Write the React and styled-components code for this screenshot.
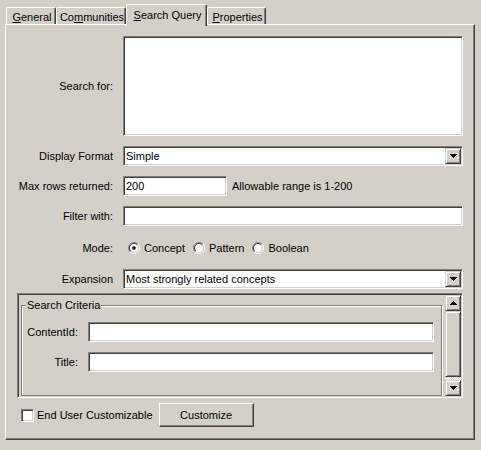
import React from "react";
import styled, { createGlobalStyle, css } from "styled-components";

const GlobalStyle = createGlobalStyle`
  body {
    margin: 0;
    background: #d4d0c8;
    font-family: "Liberation Sans", Arial, sans-serif;
    font-size: 11px;
    color: #000;
  }
`;

const sunken = css`
  box-sizing: border-box;
  background: #fff;
  border: 1px solid;
  border-color: #808080 #fff #fff #808080;
  box-shadow: inset 1px 1px #404040, inset -1px -1px #d4d0c8;
`;

const raised = css`
  box-sizing: border-box;
  background: #d4d0c8;
  border: 1px solid;
  border-color: #d4d0c8 #404040 #404040 #d4d0c8;
  box-shadow: inset 1px 1px #fff, inset -1px -1px #808080;
`;

const Window = styled.div`
  width: 481px;
  height: 450px;
  box-sizing: border-box;
  padding-top: 4px;
`;

const TabBar = styled.div`
  display: flex;
  align-items: flex-end;
  height: 20px;
  padding-left: 6px;
  position: relative;
  z-index: 1;
`;

const Tab = styled.div`
  box-sizing: border-box;
  width: ${p => p.$w}px;
  height: ${p => (p.$active ? 22 : 17)}px;
  margin-bottom: ${p => (p.$active ? -2 : 0)}px;
  padding-top: ${p => (p.$active ? 4 : 3)}px;
  padding-left: 2px;
  line-height: 13px;
  text-align: center;
  white-space: nowrap;
  background: #d4d0c8;
  border-top: 1px solid #fff;
  border-left: 1px solid #fff;
  border-right: 1px solid #404040;
  border-radius: 2px 2px 0 0;
  box-shadow: inset -1px 0 #808080;
`;

const Panel = styled.div`
  box-sizing: border-box;
  width: 470px;
  margin-left: 5px;
  padding: 11px 11px 12px 1px;
  border: 1px solid;
  border-color: #fff #404040 #404040 #fff;
  box-shadow: inset -1px -1px #808080;
`;

const Form = styled.div`
  display: grid;
  grid-template-columns: 106px 340px;
  column-gap: 10px;
  row-gap: 10px;
  align-items: center;
`;

const Label = styled.label`
  text-align: right;
  white-space: nowrap;
`;

const TextArea = styled.textarea`
  ${sunken};
  display: block;
  width: 100%;
  height: 100px;
  margin: 0;
  padding: 2px;
  resize: none;
  outline: none;
  font: inherit;
`;

const Field = styled.input`
  ${sunken};
  display: block;
  width: ${p => (p.$w ? `${p.$w}px` : "100%")};
  height: 20px;
  margin: 0;
  padding: 0 2px;
  outline: none;
  font: inherit;
  color: #000;
`;

const Inline = styled.div`
  display: flex;
  align-items: center;
  gap: 5px;
`;

const Combo = styled.div`
  ${sunken};
  display: flex;
  height: 20px;
  padding: 1px;
`;

const ComboText = styled.div`
  flex: 1;
  padding-left: 1px;
  line-height: 16px;
`;

const ArrowButton = styled.div`
  ${raised};
  width: 16px;
  height: 16px;
  display: flex;
  align-items: center;
  justify-content: center;
`;

const RadioGroup = styled.div`
  display: flex;
  align-items: center;
  height: 23px;
  padding-left: 5px;
`;

const RadioOption = styled.span`
  display: flex;
  align-items: center;
  gap: 4px;
  margin-right: 8px;
`;

const ScrollPane = styled.div`
  ${sunken};
  background: #d4d0c8;
  display: flex;
  height: 105px;
  margin: 4px 0 0 10px;
  padding: 1px;
`;

const Viewport = styled.div`
  flex: 1;
  overflow: hidden;
  padding: 4px 3px 0 2px;
`;

const GroupBox = styled.fieldset`
  margin: 0;
  min-width: 0;
  padding: 10px 7px 23px 4px;
  border: 1px solid #808080;
  box-shadow: inset 1px 1px #fff, 1px 1px 0 #fff;
`;

const Legend = styled.legend`
  padding: 0 1px;
  line-height: 13px;
  background: #d4d0c8;
`;

const GroupGrid = styled.div`
  display: grid;
  grid-template-columns: 52px 346px;
  column-gap: 10px;
  row-gap: 10px;
  align-items: center;
`;

const ScrollBar = styled.div`
  display: flex;
  flex-direction: column;
  width: 16px;
`;

const Thumb = styled.div`
  ${raised};
  flex: 1;
`;

const Track = styled.div`
  height: 3px;
  background: repeating-conic-gradient(#fff 0 25%, #d4d0c8 0 50%) 0 0 / 2px 2px;
`;

const BottomRow = styled.div`
  display: flex;
  align-items: center;
  height: 24px;
  margin: 5px 0 0 14px;
`;

const CheckBox = styled.span`
  ${sunken};
  width: 13px;
  height: 13px;
  margin-right: 3px;
`;

const Button = styled.button`
  box-sizing: border-box;
  width: 95px;
  height: 24px;
  margin-left: 6px;
  padding: 0;
  font: inherit;
  color: #000;
  background: #d4d0c8;
  border: 1px solid;
  border-color: #fff #404040 #404040 #fff;
  box-shadow: inset -1px -1px #808080;
`;

const Arrow = ({ up }) => (
  <svg width="7" height="4" viewBox="0 0 7 4" style={up ? { transform: "scaleY(-1)" } : undefined}>
    <path d="M0 0H7V1H6V2H5V3H4V4H3V3H2V2H1V1H0Z" fill="#000" />
  </svg>
);

const Radio = ({ checked }) => (
  <svg width="12" height="12" viewBox="0 0 12 12">
    <circle cx="6" cy="6" r="4.2" fill="#fff" />
    <path d="M2.1 9.9A5.5 5.5 0 0 1 9.9 2.1" stroke="#808080" fill="none" />
    <path d="M9.9 2.1A5.5 5.5 0 0 1 2.1 9.9" stroke="#fff" fill="none" />
    <path d="M2.8 9.2A4.5 4.5 0 0 1 9.2 2.8" stroke="#404040" fill="none" />
    <path d="M9.2 2.8A4.5 4.5 0 0 1 2.8 9.2" stroke="#d4d0c8" fill="none" />
    {checked && <circle cx="6" cy="6" r="1.8" fill="#000" />}
  </svg>
);

const tabs = [
  { pre: "", key: "G", post: "eneral", w: 50 },
  { pre: "Co", key: "m", post: "munities", w: 70 },
  { pre: "", key: "S", post: "earch Query", w: 81, active: true },
  { pre: "", key: "P", post: "roperties", w: 59 },
];

export default function App() {
  return (
    <Window>
      <GlobalStyle />
      <TabBar>
        {tabs.map(t => (
          <Tab key={t.post} $w={t.w} $active={t.active}>
            {t.pre}<u>{t.key}</u>{t.post}
          </Tab>
        ))}
      </TabBar>
      <Panel>
        <Form>
          <Label>Search for:</Label>
          <TextArea />

          <Label>Display Format</Label>
          <Combo>
            <ComboText>Simple</ComboText>
            <ArrowButton><Arrow /></ArrowButton>
          </Combo>

          <Label>Max rows returned:</Label>
          <Inline>
            <Field $w={104} defaultValue="200" />
            <span>Allowable range is 1-200</span>
          </Inline>

          <Label>Filter with:</Label>
          <Field />

          <Label>Mode:</Label>
          <RadioGroup>
            <RadioOption><Radio checked />Concept</RadioOption>
            <RadioOption><Radio />Pattern</RadioOption>
            <RadioOption><Radio />Boolean</RadioOption>
          </RadioGroup>

          <Label>Expansion</Label>
          <Combo>
            <ComboText>Most strongly related concepts</ComboText>
            <ArrowButton><Arrow /></ArrowButton>
          </Combo>
        </Form>

        <ScrollPane>
          <Viewport>
            <GroupBox>
              <Legend>Search Criteria</Legend>
              <GroupGrid>
                <Label>ContentId:</Label>
                <Field />
                <Label>Title:</Label>
                <Field />
              </GroupGrid>
            </GroupBox>
          </Viewport>
          <ScrollBar>
            <ArrowButton><Arrow up /></ArrowButton>
            <Thumb />
            <Track />
            <ArrowButton><Arrow /></ArrowButton>
          </ScrollBar>
        </ScrollPane>

        <BottomRow>
          <CheckBox />
          <span>End User Customizable</span>
          <Button>Customize</Button>
        </BottomRow>
      </Panel>
    </Window>
  );
}
